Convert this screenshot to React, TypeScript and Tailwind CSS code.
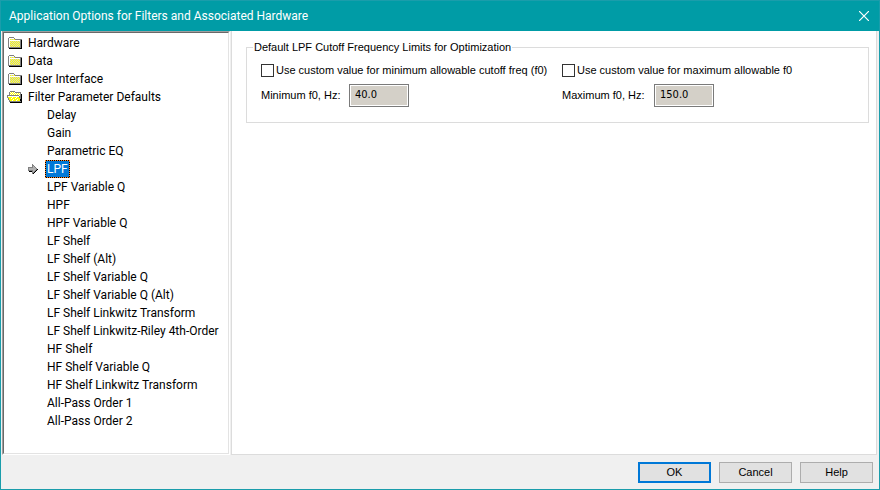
const categories = [
  { name: 'Hardware', open: false },
  { name: 'Data', open: false },
  { name: 'User Interface', open: false },
  { name: 'Filter Parameter Defaults', open: true },
];

const filterPages = [
  'Delay',
  'Gain',
  'Parametric EQ',
  'LPF',
  'LPF Variable Q',
  'HPF',
  'HPF Variable Q',
  'LF Shelf',
  'LF Shelf (Alt)',
  'LF Shelf Variable Q',
  'LF Shelf Variable Q (Alt)',
  'LF Shelf Linkwitz Transform',
  'LF Shelf Linkwitz-Riley 4th-Order',
  'HF Shelf',
  'HF Shelf Variable Q',
  'HF Shelf Linkwitz Transform',
  'All-Pass Order 1',
  'All-Pass Order 2',
];

const limits = [
  { id: 'min', check: 'Use custom value for minimum allowable cutoff freq (f0)', label: 'Minimum f0, Hz:', value: '40.0', labelWidth: 'w-[88px]' },
  { id: 'max', check: 'Use custom value for maximum allowable f0', label: 'Maximum f0, Hz:', value: '150.0', labelWidth: 'w-[92px]' },
];

// Pixel icons: one character per pixel
const pixelColors: Record<string, string> = {
  g: '#808080',
  k: '#000000',
  w: '#ffffff',
  s: '#d0d0d0',
  y: '#ffff00',
  l: '#b0b0b0',
};

const closedFolder = [
  '..ggggg........',
  '.gwwwwwg.......',
  '.gwysysyggggggg',
  '.gwwwwwwwwwwwgk',
  '.gwysysysysysgk',
  '.gwsysysysysygk',
  '.gwysysysysysgk',
  '.gwsysysysysygk',
  '.gwysysysysysgk',
  '.gwsysysysysygk',
  '.gggggggggggggk',
  '..kkkkkkkkkkkkk',
];

const openFolder = [
  '...ggggg.......',
  '..gwywywgggggg.',
  '..gywywywywywg.',
  '..gwywywywywygk',
  'ggggggggggggwgk',
  'gwwwwwwwwwwwggk',
  'gyyyywyyywyyggk',
  '.gyywyyywyyyygk',
  '.gyyyywyyywyykk',
  '..gyywyyywyyykk',
  '..ggggggggggggk',
  '...kkkkkkkkkkkk',
];

const arrow = [
  '....g.....',
  '....gg....',
  '....glg...',
  'gggggllg..',
  'glllllllg.',
  'glllllllgk',
  'gggggllgk.',
  '.kkkglgk..',
  '....ggk...',
  '....gk....',
];

const PixelIcon = ({ rows }: { rows: string[] }) => (
  <svg
    width={rows[0].length}
    height={rows.length}
    viewBox={`0 0 ${rows[0].length} ${rows.length}`}
    shapeRendering="crispEdges"
    className="shrink-0"
    aria-hidden="true"
  >
    {rows.flatMap((row, y) =>
      [...row].map((c, x) => pixelColors[c] && <rect key={`${x}-${y}`} x={x} y={y} width="1" height="1" fill={pixelColors[c]} />)
    )}
  </svg>
);

const buttonBase = 'flex h-[21px] w-[73px] items-center justify-center bg-[#e1e1e1]';

export default function App() {
  return (
    <div className="flex min-h-screen flex-col border border-[#1a9dab] bg-[#f0f0f0] font-[Roboto,sans-serif] text-[12px] text-black">
      <header className="flex h-[30px] shrink-0 items-center justify-between bg-[#009ca6] pr-[10px] pl-2 text-white">
        <h1>Application Options for Filters and Associated Hardware</h1>
        <button type="button" aria-label="Close">
          <svg width="10" height="10" viewBox="0 0 10 10" fill="none" stroke="currentColor" strokeWidth="1.2">
            <path d="M0 0l10 10M10 0l-10 10" />
          </svg>
        </button>
      </header>

      <main className="flex grow gap-px pr-[2px]">
        {/* Option pages */}
        <nav className="ml-px w-[228px] shrink-0 border border-t-[#a0a0a0] border-r-white border-b-white border-l-[#a0a0a0]">
          <div className="h-full border border-t-[#696969] border-r-[#e3e3e3] border-b-[#e3e3e3] border-l-[#696969] bg-white pt-px">
            <ul className="leading-[18px] whitespace-nowrap">
              {categories.map((cat) => (
                <li key={cat.name} className="flex h-[18px] items-center gap-[6px] pl-[3px]">
                  <PixelIcon rows={cat.open ? openFolder : closedFolder} />
                  <a href="#">{cat.name}</a>
                </li>
              ))}
              {filterPages.map((page) => (
                <li key={page} className="flex h-[18px] items-center">
                  <span className="flex w-[41px] shrink-0 justify-end pr-[7px]">{page === 'LPF' && <PixelIcon rows={arrow} />}</span>
                  <a
                    href="#"
                    className={page === 'LPF' ? 'border border-dotted border-[#ff8728] bg-black' : 'px-[2px]'}
                  >
                    {page === 'LPF' ? <span className="block bg-[#0078d7] px-px leading-[16px] text-white">{page}</span> : page}
                  </a>
                </li>
              ))}
            </ul>
          </div>
        </nav>

        <section className="grow border border-t-0 border-[#dcdcdc] bg-white pt-[8px] pr-[7px] pl-[14px] font-['Liberation_Sans',Arial,sans-serif] text-[11px]">
          <fieldset className="border border-[#dcdcdc] pb-[15px] pl-[14px]">
            <legend className="-ml-2 px-px leading-[16px]">Default LPF Cutoff Frequency Limits for Optimization</legend>
            <div className="flex">
              {limits.map((limit) => (
                <div key={limit.id} className="w-[301px] pt-2">
                  <label className="flex h-[14px] items-center gap-[2px] leading-[14px] whitespace-nowrap">
                    <input type="checkbox" className="size-[13px] shrink-0 appearance-none border border-[#333333] bg-white" />
                    {limit.check}
                  </label>
                  <div className="mt-[7px] flex items-center">
                    <label htmlFor={limit.id} className={limit.labelWidth}>
                      {limit.label}
                    </label>
                    <input
                      id={limit.id}
                      type="text"
                      disabled
                      defaultValue={limit.value}
                      className="h-[23px] w-[60px] border border-[#7a7a7a] bg-[#d4d0c8] pb-[3px] pl-[5px] font-['DejaVu_Sans_Condensed','DejaVu_Sans',sans-serif] text-black outline outline-1 -outline-offset-2 outline-white"
                    />
                  </div>
                </div>
              ))}
            </div>
          </fieldset>
        </section>
      </main>

      <footer className="flex h-[34px] shrink-0 items-start justify-end gap-2 pt-[7px] pr-[6px] font-['Liberation_Sans',Arial,sans-serif] text-[11px]">
        <button type="button" className={`${buttonBase} border-2 border-[#0078d7]`}>OK</button>
        <button type="button" className={`${buttonBase} border border-[#adadad]`}>Cancel</button>
        <button type="button" className={`${buttonBase} border border-[#adadad]`}>Help</button>
      </footer>
    </div>
  );
}
